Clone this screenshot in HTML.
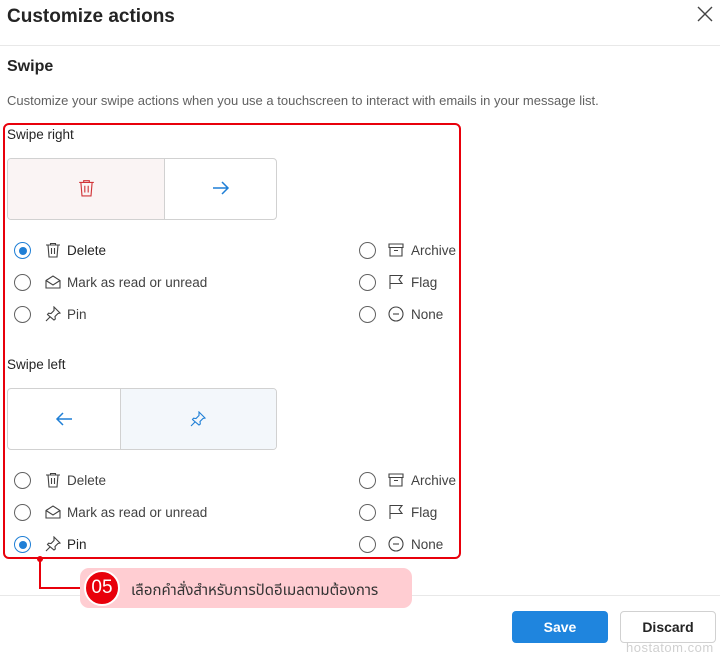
<!DOCTYPE html>
<html><head><meta charset="utf-8"><style>
*{box-sizing:border-box;margin:0;padding:0}
body{width:720px;height:657px;background:#fff;font-family:"Liberation Sans","DejaVu Sans",sans-serif;color:#242424;position:relative;overflow:hidden}
.a{position:absolute;white-space:nowrap}
.radio{position:absolute;width:17px;height:17px;border:1px solid #616161;border-radius:50%}
.radio.on{border-color:#1f7fd6}
.radio.on::after{content:"";position:absolute;left:3.5px;top:3.5px;width:8px;height:8px;border-radius:50%;background:#1f7fd6}
.lbl{position:absolute;font-size:13.5px;color:#424242}
svg.i{position:absolute;width:16px;height:16px;fill:none;stroke:#424242;stroke-width:1.1}
</style></head><body>
<div class="a" style="left:7px;top:6px;font-size:19px;font-weight:bold;color:#242424">Customize actions</div>
<svg class="a" style="left:697px;top:6px" width="16" height="16" viewBox="0 0 16 16"><path d="M1 1L15 15M15 1L1 15" stroke="#444" stroke-width="1.4"/></svg>
<div class="a" style="left:0;top:45px;width:720px;height:1px;background:#e8e8e8"></div>
<div class="a" style="left:7px;top:58px;font-size:16px;font-weight:bold">Swipe</div>
<div class="a" style="left:7px;top:93px;font-size:13px;color:#616161">Customize your swipe actions when you use a touchscreen to interact with emails in your message list.</div>
<div class="a" style="left:3px;top:123px;width:458px;height:436px;border:2px solid #e8000b;border-radius:6px"></div>

<div class="a" style="left:7px;top:127px;font-size:13.5px">Swipe right</div>
<div class="a" style="left:7px;top:158px;width:270px;height:62px;border:1px solid #d1d1d1;border-radius:4px;overflow:hidden">
 <div style="position:absolute;left:0;top:0;width:157px;height:60px;background:#faf4f4;border-right:1px solid #d1d1d1"></div>
</div>
<svg class="a" style="left:78px;top:179px" width="17" height="18" viewBox="0 0 15 16" fill="none" stroke="#d13438" stroke-width="1"><path d="M1 3h13M5 3V1.5h5V3M2.5 3l1 12h8l1-12M6 6v6M9 6v6"/></svg>
<svg class="a" style="left:212px;top:181px" width="18" height="14" viewBox="0 0 18 14" fill="none" stroke="#1f7fd6" stroke-width="1.5"><path d="M1 7h15M10 1l6 6-6 6"/></svg>

<div class="a" style="left:7px;top:357px;font-size:13.5px">Swipe left</div>
<div class="a" style="left:7px;top:388px;width:270px;height:62px;border:1px solid #d1d1d1;border-radius:4px;overflow:hidden">
 <div style="position:absolute;left:112px;top:0;width:158px;height:60px;background:#f3f7fb;border-left:1px solid #d1d1d1"></div>
</div>
<svg class="a" style="left:55px;top:412px" width="18" height="14" viewBox="0 0 18 14" fill="none" stroke="#1f7fd6" stroke-width="1.5"><path d="M17 7H2M8 1L2 7l6 6"/></svg>
<svg class="a" style="left:190px;top:411px" width="16" height="16" viewBox="0 0 16 16" fill="none" stroke="#1f7fd6" stroke-width="1.1"><path d="M9 1l6 6-2 .5-3 3 .3 2.5-1.3 1L2.5 8.5l1-1.3 2.5.3 3-3z M5 11l-4 4"/></svg>

<div class="radio on" style="left:14px;top:242px"></div>
<svg class="i" style="left:45px;top:242px" viewBox="0 0 16 16"><path d="M1 3h14M5.5 3V1.5h5V3M3 3l1 12h8l1-12M6.5 6v6M9.5 6v6"/></svg>
<div class="lbl" style="left:67px;top:243px;color:#242424">Delete</div>
<div class="radio" style="left:14px;top:274px"></div>
<svg class="i" style="left:45px;top:274px" viewBox="0 0 16 16"><path d="M1 6.5L8 2l7 4.5V14H1z M1 6.5l7 4.5 7-4.5"/></svg>
<div class="lbl" style="left:67px;top:275px">Mark as read or unread</div>
<div class="radio" style="left:14px;top:306px"></div>
<svg class="i" style="left:45px;top:306px" viewBox="0 0 16 16"><path d="M9 1l6 6-2 .5-3 3 .3 2.5-1.3 1L2.5 8.5l1-1.3 2.5.3 3-3z M5 11l-4 4"/></svg>
<div class="lbl" style="left:67px;top:307px">Pin</div>
<div class="radio" style="left:359px;top:242px"></div>
<svg class="i" style="left:388px;top:242px" viewBox="0 0 16 16"><path d="M1 2h14v3.5H1z M2 5.5V14h12V5.5 M6 8.5h4"/></svg>
<div class="lbl" style="left:411px;top:243px">Archive</div>
<div class="radio" style="left:359px;top:274px"></div>
<svg class="i" style="left:388px;top:274px" viewBox="0 0 16 16"><path d="M2 15V1.5h12l-3 4 3 4H2"/></svg>
<div class="lbl" style="left:411px;top:275px">Flag</div>
<div class="radio" style="left:359px;top:306px"></div>
<svg class="i" style="left:388px;top:306px" viewBox="0 0 16 16"><circle cx="8" cy="8" r="7"/><path d="M5 8h6"/></svg>
<div class="lbl" style="left:411px;top:307px">None</div>

<div class="radio" style="left:14px;top:472px"></div>
<svg class="i" style="left:45px;top:472px" viewBox="0 0 16 16"><path d="M1 3h14M5.5 3V1.5h5V3M3 3l1 12h8l1-12M6.5 6v6M9.5 6v6"/></svg>
<div class="lbl" style="left:67px;top:473px">Delete</div>
<div class="radio" style="left:14px;top:504px"></div>
<svg class="i" style="left:45px;top:504px" viewBox="0 0 16 16"><path d="M1 6.5L8 2l7 4.5V14H1z M1 6.5l7 4.5 7-4.5"/></svg>
<div class="lbl" style="left:67px;top:505px">Mark as read or unread</div>
<div class="radio on" style="left:14px;top:536px"></div>
<svg class="i" style="left:45px;top:536px" viewBox="0 0 16 16"><path d="M9 1l6 6-2 .5-3 3 .3 2.5-1.3 1L2.5 8.5l1-1.3 2.5.3 3-3z M5 11l-4 4"/></svg>
<div class="lbl" style="left:67px;top:537px;color:#242424">Pin</div>
<div class="radio" style="left:359px;top:472px"></div>
<svg class="i" style="left:388px;top:472px" viewBox="0 0 16 16"><path d="M1 2h14v3.5H1z M2 5.5V14h12V5.5 M6 8.5h4"/></svg>
<div class="lbl" style="left:411px;top:473px">Archive</div>
<div class="radio" style="left:359px;top:504px"></div>
<svg class="i" style="left:388px;top:504px" viewBox="0 0 16 16"><path d="M2 15V1.5h12l-3 4 3 4H2"/></svg>
<div class="lbl" style="left:411px;top:505px">Flag</div>
<div class="radio" style="left:359px;top:536px"></div>
<svg class="i" style="left:388px;top:536px" viewBox="0 0 16 16"><circle cx="8" cy="8" r="7"/><path d="M5 8h6"/></svg>
<div class="lbl" style="left:411px;top:537px">None</div>

<div class="a" style="left:0;top:595px;width:720px;height:1px;background:#e8e8e8"></div>
<div class="a" style="left:39px;top:557px;width:2px;height:32px;background:#e8000b"></div>
<div class="a" style="left:37px;top:556px;width:6px;height:6px;border-radius:50%;background:#e8000b"></div>
<div class="a" style="left:39px;top:587px;width:50px;height:2px;background:#e8000b"></div>
<div class="a" style="left:80px;top:568px;width:332px;height:40px;background:#ffcdd2;border-radius:9px"></div>
<div class="a" style="left:84px;top:570px;width:36px;height:36px;border-radius:50%;background:#e8000b;border:2px solid #fff;color:#fff;font-size:19px;text-align:center;line-height:32px">05</div>
<div class="a" style="left:131px;top:579px;font-size:15px;color:#333;font-family:'Liberation Sans','Noto Sans Thai','Tlwg Typist',sans-serif">เลือกคำสั่งสำหรับการปัดอีเมลตามต้องการ</div>

<div class="a" style="left:512px;top:611px;width:96px;height:32px;background:#1f85de;border-radius:4px;color:#fff;font-weight:bold;font-size:14px;text-align:center;line-height:32px">Save</div>
<div class="a" style="left:620px;top:611px;width:96px;height:32px;border:1px solid #d1d1d1;border-radius:4px;color:#242424;font-weight:bold;font-size:14px;text-align:center;line-height:30px">Discard</div>
<div class="a" style="left:626px;top:640px;font-size:13px;color:#d0d0d0;letter-spacing:0.5px">hostatom.com</div>
</body></html>
